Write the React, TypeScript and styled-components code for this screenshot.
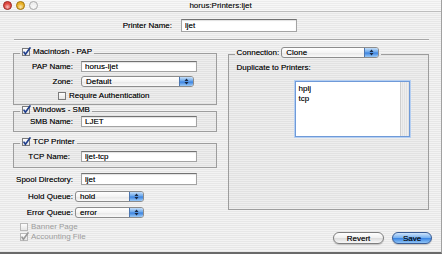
import styled, { createGlobalStyle } from 'styled-components';

const GlobalStyle = createGlobalStyle`
  html, body {
    margin: 0;
    padding: 0;
    overflow: hidden;
  }
  body {
    font-family: 'Liberation Sans', Arial, sans-serif;
    font-size: 8px;
    color: #0c0c0c;
    text-shadow: 0 0 0.4px rgba(0, 0, 0, 0.55);
  }
`;

const stripes = `repeating-linear-gradient(to bottom, #f3f3f3 0px, #f3f3f3 1px, #e7e7e7 1px, #e7e7e7 2px)`;

const Window = styled.div`
  width: 442px;
  height: 254px;
  box-sizing: border-box;
  display: flex;
  flex-direction: column;
  background: ${stripes};
  border-bottom: 2px solid #6a6a6a;
  border-right: 1px solid #a0a0a0;
`;

const TitleBar = styled.div`
  flex: none;
  height: 11px;
  display: grid;
  grid-template-columns: 1fr auto 1fr;
  align-items: center;
  background: repeating-linear-gradient(to bottom, #f7f7f7 0px, #f7f7f7 1px, #ececec 1px, #ececec 2px);
  border-bottom: 1px solid #bdbdbd;
`;

const Lights = styled.div`
  display: flex;
  gap: 4px;
  padding-left: 3px;
`;

const Light = styled.span<{ $color: string; $edge: string }>`
  width: 9px;
  height: 9px;
  box-sizing: border-box;
  border-radius: 50%;
  border: 1px solid ${(p) => p.$edge};
  background: radial-gradient(circle at 50% 70%, #ffffffaa 0, transparent 55%), ${(p) => p.$color};
`;

const Title = styled.div`
  font-size: 8px;
  color: #1d1d1d;
  line-height: 11px;
`;

const Body = styled.div`
  flex: 1;
  display: flex;
  flex-direction: column;
  padding: 7px 12px 0 13px;
`;

const NameRow = styled.div`
  display: flex;
  align-items: center;
  gap: 9px;
  padding-left: 99px;
`;

const Label = styled.span<{ $w?: number; $muted?: boolean }>`
  width: ${(p) => (p.$w ? `${p.$w}px` : 'auto')};
  text-align: right;
  white-space: nowrap;
  color: ${(p) => (p.$muted ? '#9c9c9c' : 'inherit')};
  text-shadow: ${(p) => (p.$muted ? 'none' : 'inherit')};
  line-height: 9px;
`;

const TextField = styled.input<{ $w: number; $h?: number }>`
  width: ${(p) => p.$w}px;
  height: ${(p) => p.$h ?? 11}px;
  box-sizing: border-box;
  margin: 0;
  padding: 0 3px;
  border: 1px solid #a3a3a3;
  border-top-color: #727272;
  background: #fff;
  box-shadow: inset 0 1px 1px rgba(0, 0, 0, 0.12);
  font-family: inherit;
  font-size: 8px;
  color: #0c0c0c;
  text-shadow: 0 0 0.4px rgba(0, 0, 0, 0.55);
  outline: none;
`;

const Rule = styled.div`
  margin: 7px 0 0 1px;
  height: 1px;
  background: #a6a6a6;
  border-bottom: 1px solid #fbfbfb;
`;

const Columns = styled.div`
  display: flex;
  gap: 11px;
  margin-top: 6px;
`;

const Column = styled.div<{ $w: number }>`
  width: ${(p) => p.$w}px;
  display: flex;
  flex-direction: column;
`;

const Group = styled.fieldset<{ $h?: number; $top?: number; $pad?: number }>`
  margin: ${(p) => p.$top ?? 0}px 0 0 0;
  padding: 0 0 ${(p) => p.$pad ?? 4}px 0;
  min-width: 0;
  box-sizing: border-box;
  height: ${(p) => (p.$h ? `${p.$h}px` : 'auto')};
  border: 1px solid #9d9d9d;
  background: rgba(0, 0, 0, 0.02);
  display: flex;
  flex-direction: column;
`;

const Legend = styled.legend`
  margin-left: 6px;
  padding: 0 2px 4px;
  display: flex;
  align-items: center;
  gap: 2px;
  line-height: 9px;
`;

const Row = styled.div<{ $label: number; $gap: number; $top: number }>`
  display: grid;
  grid-template-columns: ${(p) => p.$label}px auto;
  column-gap: ${(p) => p.$gap}px;
  align-items: center;
  justify-content: start;
  margin-top: ${(p) => p.$top}px;
`;

const CheckRow = styled.div<{ $left: number; $top: number }>`
  display: flex;
  align-items: center;
  gap: 2px;
  margin: ${(p) => p.$top}px 0 0 ${(p) => p.$left}px;
  line-height: 9px;
`;

const PopupBox = styled.div<{ $w: number; $h: number }>`
  width: ${(p) => p.$w}px;
  height: ${(p) => p.$h}px;
  box-sizing: border-box;
  display: flex;
  align-items: center;
  border: 1px solid #8c8c8c;
  border-radius: 3px;
  background: linear-gradient(to bottom, #ffffff 0%, #f4f4f4 50%, #e6e6e6 51%, #fafafa 100%);
  padding-left: 4px;
  overflow: hidden;
  line-height: 9px;
`;

const PopupCap = styled.span`
  margin-left: auto;
  width: 13px;
  align-self: stretch;
  display: flex;
  align-items: center;
  justify-content: center;
  border-left: 1px solid #4c76b0;
  background: linear-gradient(to bottom, #c4def9 0%, #6aa6ea 45%, #3b82e0 55%, #9ccbf7 100%);
`;

const Hint = styled.div`
  margin: 1px 0 0 8px;
  line-height: 9px;
`;

const ListBox = styled.div`
  margin: 9px 0 0 66px;
  width: 115px;
  height: 56px;
  box-sizing: border-box;
  display: flex;
  background: #fff;
  border: 1px solid #6f9ad8;
  box-shadow: 0 0 0 1px #b5cff2;
`;

const ListItems = styled.div`
  flex: 1;
  padding: 2px 3px;
  line-height: 10px;
`;

const ScrollTrack = styled.div`
  width: 8px;
  border-left: 1px solid #cfcfcf;
  background: repeating-linear-gradient(to right, #eeeeee 0px, #eeeeee 1px, #e2e2e2 1px, #e2e2e2 2px);
`;

const Buttons = styled.div`
  display: flex;
  justify-content: flex-end;
  gap: 8px;
  margin: 22px -3px 0 0;
`;

const Button = styled.div<{ $w: number; $primary?: boolean }>`
  width: ${(p) => p.$w}px;
  height: 12px;
  box-sizing: border-box;
  border-radius: 6px;
  display: flex;
  align-items: center;
  justify-content: center;
  font-size: 8px;
  border: 1px solid ${(p) => (p.$primary ? '#3a5c94' : '#7d7d7d')};
  background: ${(p) =>
    p.$primary
      ? 'linear-gradient(to bottom, #cfe4fb 0%, #7db4f0 45%, #3d87e4 55%, #8fc4f6 100%)'
      : 'linear-gradient(to bottom, #ffffff 0%, #f1f1f1 45%, #dedede 55%, #f7f7f7 100%)'};
  box-shadow: 0 1px 1px rgba(0, 0, 0, 0.2);
`;

const Arrows = () => (
  <svg width="5" height="7" viewBox="0 0 5 7">
    <path d="M2.5 0.5 L4.5 3 L0.5 3 Z M0.5 4 L4.5 4 L2.5 6.5 Z" fill="#1a2a45" />
  </svg>
);

const Popup = ({ w, h = 11, value }: { w: number; h?: number; value: string }) => (
  <PopupBox $w={w} $h={h}>
    {value}
    <PopupCap>
      <Arrows />
    </PopupCap>
  </PopupBox>
);

const Check = ({ on, disabled }: { on?: boolean; disabled?: boolean }) => (
  <svg width="9" height="9" viewBox="0 0 9 9" style={{ flex: 'none' }}>
    <defs>
      <linearGradient id="cb" x1="0" y1="0" x2="0" y2="1">
        <stop offset="0" stopColor="#ffffff" />
        <stop offset="1" stopColor="#e4e4e4" />
      </linearGradient>
    </defs>
    <rect
      x="0.5"
      y="1.5"
      width="7"
      height="7"
      fill="url(#cb)"
      stroke={disabled ? '#b8b8b8' : '#7a7a7a'}
    />
    {on && (
      <path
        d="M1.6 4.6 L3.4 7.3 L8.4 0.4"
        fill="none"
        stroke={disabled ? '#9a9a9a' : '#1f3e8c'}
        strokeWidth="1.6"
      />
    )}
  </svg>
);

export default function App() {
  return (
    <>
      <GlobalStyle />
      <Window>
        <TitleBar>
          <Lights>
            <Light $color="#e0473f" $edge="#9a2a25" />
            <Light $color="#e9b124" $edge="#a27412" />
            <Light $color="#eeeeee" $edge="#a9a9a9" />
          </Lights>
          <Title>horus:Printers:ljet</Title>
          <span />
        </TitleBar>
        <Body>
          <NameRow>
            <Label $w={60}>Printer Name:</Label>
            <TextField $w={116} $h={13} readOnly defaultValue="ljet" />
          </NameRow>
          <Rule />
          <Columns>
            <Column $w={204}>
              <Group>
                <Legend>
                  <Check on />
                  Macintosh - PAP
                </Legend>
                <Row $label={59} $gap={8} $top={1}>
                  <Label>PAP Name:</Label>
                  <TextField $w={116} readOnly defaultValue="horus-ljet" />
                </Row>
                <Row $label={59} $gap={8} $top={4}>
                  <Label>Zone:</Label>
                  <Popup w={113} value="Default" />
                </Row>
                <CheckRow $left={44} $top={4}>
                  <Check />
                  Require Authentication
                </CheckRow>
              </Group>
              <Group>
                <Legend>
                  <Check on />
                  Windows - SMB
                </Legend>
                <Row $label={59} $gap={8} $top={-2}>
                  <Label>SMB Name:</Label>
                  <TextField $w={116} readOnly defaultValue="LJET" />
                </Row>
              </Group>
              <Group $top={5} $pad={5}>
                <Legend>
                  <Check on />
                  TCP Printer
                </Legend>
                <Row $label={56} $gap={11} $top={1}>
                  <Label>TCP Name:</Label>
                  <TextField $w={116} readOnly defaultValue="ljet-tcp" />
                </Row>
              </Group>
              <Row $label={60} $gap={8} $top={5}>
                <Label>Spool Directory:</Label>
                <TextField $w={116} $h={12} readOnly defaultValue="ljet" />
              </Row>
              <Row $label={60} $gap={2} $top={6}>
                <Label>Hold Queue:</Label>
                <Popup w={69} value="hold" />
              </Row>
              <Row $label={60} $gap={2} $top={5}>
                <Label>Error Queue:</Label>
                <Popup w={69} value="error" />
              </Row>
              <CheckRow $left={7} $top={4}>
                <Check disabled />
                <Label $muted>Banner Page</Label>
              </CheckRow>
              <CheckRow $left={7} $top={1}>
                <Check on disabled />
                <Label $muted>Accounting File</Label>
              </CheckRow>
            </Column>
            <Column $w={202}>
              <Group $h={163}>
                <Legend>
                  Connection:
                  <Popup w={98} value="Clone" />
                </Legend>
                <Hint>Duplicate to Printers:</Hint>
                <ListBox>
                  <ListItems>
                    <div>hplj</div>
                    <div>tcp</div>
                  </ListItems>
                  <ScrollTrack />
                </ListBox>
              </Group>
              <Buttons>
                <Button $w={51}>Revert</Button>
                <Button $w={40} $primary>
                  Save
                </Button>
              </Buttons>
            </Column>
          </Columns>
        </Body>
      </Window>
    </>
  );
}
